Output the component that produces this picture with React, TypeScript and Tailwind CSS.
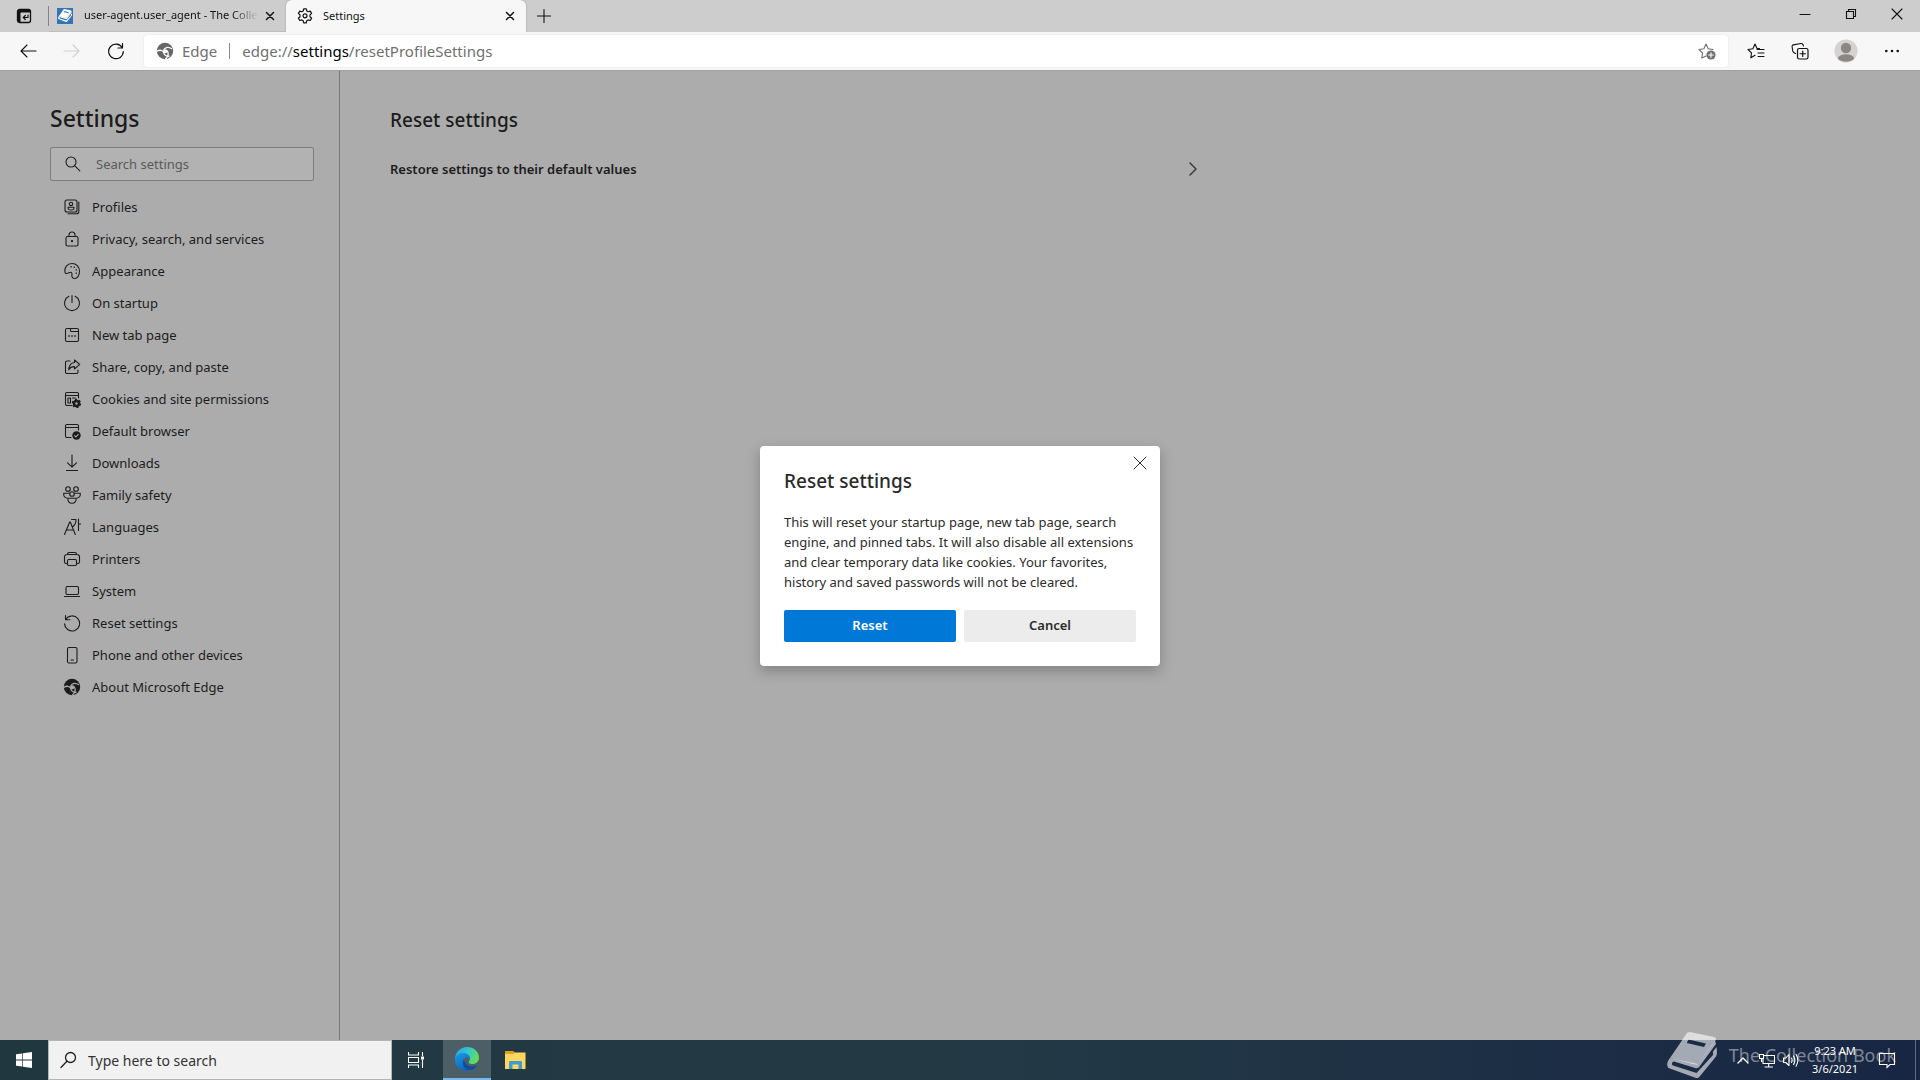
import { useState } from "react";
import type { ReactNode } from "react";

interface IconProps {
  children: ReactNode;
  className?: string;
  box?: number;
}

function Icon({ children, className = "size-[18px]", box = 18 }: IconProps) {
  return (
    <svg
      viewBox={`0 0 ${box} ${box}`}
      className={`shrink-0 ${className}`}
      fill="none"
      stroke="currentColor"
      strokeWidth="1.1"
      strokeLinecap="round"
      strokeLinejoin="round"
      aria-hidden="true"
    >
      {children}
    </svg>
  );
}

function EdgeMark({ className, id }: { className?: string; id: string }) {
  return (
    <svg viewBox="0 0 18 18" className={`shrink-0 ${className}`} aria-hidden="true">
      <mask id={id}>
        <circle cx="9" cy="9" r="8.2" fill="white" />
        <circle cx="9.300" cy="9.300" r="2" fill="black" />
        <g fill="none" stroke="black" strokeWidth="1.300">
          <path d="M8 10.500C6.500 7.700 3.500 7.600 0 9.800" />
          <path d="M7.500 8.500C8.500 5.400 11.500 4.200 16 6.800" />
          <path d="M10.800 8.500C13.200 10.800 12.500 14 9.300 17.300" />
          <path d="M7.800 9.500C7.500 12.500 9.800 14.600 13.500 14.200" />
        </g>
      </mask>
      <rect width="18" height="18" fill="currentColor" mask={`url(#${id})`} />
    </svg>
  );
}

function BookMark({ className }: { className?: string }) {
  return (
    <svg viewBox="0 0 50 46" className={className} fill="currentColor" aria-hidden="true">
      <path
        fillRule="evenodd"
        d="M23 0 47 5c2 .5 2.500 2 1.500 3.500L32 31c-1 1.500-2 2-4 1.600L3 26 19 2.500C20 .7 21 0 23 0zM21.500 7.500 19.700 11 37 15l2-3.500z"
      />
      <path d="M3 26c-2.500 3-4 7-1.500 10L29 46c1.500.4 2.500 0 3.500-1.300L49 24.500c1-1.500 1.300-5 .5-9.500L46 19.500v3.500L29.500 41 6 33.500c-2-1.500-1-3.500 1-4l21 6.500c2 .5 3.500 0 4.500-1.500L49 12l-1-3.500L31 32z" />
    </svg>
  );
}

const navItems: { title: string; icon: ReactNode }[] = [
  {
    title: "Profiles",
    icon: (
      <Icon>
        <rect x="2" y="2" width="12" height="12" rx="2" />
        <path d="M15.800 4v9.500a2.300 2.300 0 0 1-2.300 2.300H5" />
        <circle cx="8" cy="5.900" r="1.700" />
        <path d="M5 9.300h6c.3 1.800-1 2.700-3 2.700s-3.300-.9-3-2.700z" />
      </Icon>
    ),
  },
  {
    title: "Privacy, search, and services",
    icon: (
      <Icon>
        <rect x="3" y="6.500" width="12" height="9.500" rx="1.500" />
        <path d="M6 6.500V5a3 3 0 0 1 6 0v1.500" />
        <circle cx="9" cy="11.200" r=".6" fill="currentColor" />
      </Icon>
    ),
  },
  {
    title: "Appearance",
    icon: (
      <Icon>
        <path d="M2 10.300C.9 5.500 4.300 1.500 9 1.500c4.600 0 7.500 3.500 7.500 7.800 0 3.900-2 7.200-4.700 7.200-2.300 0-3.300-1.600-2.900-3.500.4-2-.5-3.200-2.200-2.500-1.500.6-4.100 1.900-4.700-.2z" />
        <g fill="currentColor" stroke="none">
          <circle cx="8" cy="4.700" r=".8" />
          <circle cx="11.300" cy="5.300" r=".8" />
          <circle cx="13.300" cy="8" r=".8" />
          <circle cx="13.300" cy="11.200" r=".8" />
        </g>
      </Icon>
    ),
  },
  {
    title: "On startup",
    icon: (
      <Icon>
        <path d="M9 1.500v7M5.800 2.300a7.500 7.500 0 1 0 6.400 0" />
      </Icon>
    ),
  },
  {
    title: "New tab page",
    icon: (
      <Icon>
        <rect x="2.500" y="2.500" width="13" height="13" rx="1.500" />
        <path d="M7.500 2.500v2c0 .6.400 1 1 1h7" />
        <path d="M5.800 10h.4M8.800 10h.4M11.800 10h.4" strokeWidth="1.500" />
      </Icon>
    ),
  },
  {
    title: "Share, copy, and paste",
    icon: (
      <Icon>
        <path d="M7 3H4a1.500 1.500 0 0 0-1.500 1.500v9.500A1.500 1.500 0 0 0 4 15.500h9.500A1.500 1.500 0 0 0 15 14v-2" />
        <path d="M11.500 2 16.700 6.400 11.500 11V8.600C8.500 8.500 6.800 9.800 5.700 11.800 6 7.700 8 4.800 11.500 4.500z" />
      </Icon>
    ),
  },
  {
    title: "Cookies and site permissions",
    icon: (
      <Icon>
        <path d="M8.500 15.500H4A1.500 1.500 0 0 1 2.500 14V4A1.500 1.500 0 0 1 4 2.500h10A1.500 1.500 0 0 1 15.500 4v4M2.500 5.500h13M5 8h2.500v5H5zM9.500 8h3" />
        <circle cx="13.500" cy="13.500" r="2.500" strokeWidth="2.500" />
        <circle cx="13.500" cy="13.500" r="4" strokeWidth="1.400" strokeDasharray="2.100 2.090" strokeLinecap="butt" />
      </Icon>
    ),
  },
  {
    title: "Default browser",
    icon: (
      <Icon>
        <path d="M8 15.500H4A1.500 1.500 0 0 1 2.500 14V4A1.500 1.500 0 0 1 4 2.500h10A1.500 1.500 0 0 1 15.500 4v4M2.500 5.500h13" />
        <circle cx="13.500" cy="13.500" r="4.200" fill="currentColor" stroke="none" />
        <path d="m11.700 13.700 1.200 1.200 2.400-2.500" className="stroke-[#acacac]" />
      </Icon>
    ),
  },
  {
    title: "Downloads",
    icon: (
      <Icon>
        <path d="M9 1v12M4.500 8.800 9 13.200l4.500-4.400M3.500 16.500h11" />
      </Icon>
    ),
  },
  {
    title: "Family safety",
    icon: (
      <Icon>
        <circle cx="5" cy="3" r="2.300" />
        <circle cx="13" cy="3" r="2.300" />
        <circle cx="9" cy="8" r="2.300" />
        <path d="M5 12.200h8c.5 3-1.200 5-4 5s-4.500-2-4-5zM6 7.200H.8C.3 9.800 1.600 11.700 4 12M12 7.200h5.200c.5 2.600-.8 4.500-3.200 4.800" />
      </Icon>
    ),
  },
  {
    title: "Languages",
    icon: (
      <Icon>
        <path d="M1.500 16.500 6.700 4h.6l5 12.500M3.400 12h7.200M8.500 1.500h4.500c0 3.500-1 5.500-3 7M15.500 1v11.500M15.500 6H18" />
      </Icon>
    ),
  },
  {
    title: "Printers",
    icon: (
      <Icon>
        <path d="M4.500 13.500H3A1.500 1.500 0 0 1 1.500 12V7A2.500 2.500 0 0 1 4 4.500h10A2.500 2.500 0 0 1 16.500 7v5a1.500 1.500 0 0 1-1.500 1.500h-1.500M4.500 4.500V4A1.500 1.500 0 0 1 6 2.500h6A1.500 1.500 0 0 1 13.500 4v.5" />
        <rect x="4.500" y="9.500" width="9" height="6" rx="1.200" />
      </Icon>
    ),
  },
  {
    title: "System",
    icon: (
      <Icon>
        <rect x="3" y="4.500" width="12.500" height="8" rx="1.200" />
        <path d="M1.500 14.500h15" />
      </Icon>
    ),
  },
  {
    title: "Reset settings",
    icon: (
      <Icon>
        <path d="M2.500 1.500v4.300h4.300M2.700 5.500a7.500 7.500 0 1 1-1.100 4.300" />
      </Icon>
    ),
  },
  {
    title: "Phone and other devices",
    icon: (
      <Icon>
        <rect x="4.500" y="1.500" width="9.500" height="15.500" rx="1.500" />
        <path d="M8 14h2.500" />
      </Icon>
    ),
  },
  { title: "About Microsoft Edge", icon: <EdgeMark id="edge-about" className="size-[18px]" /> },
];

function TabStrip() {
  return (
    <header className="flex h-8 shrink-0 bg-[#cdcdcd] text-[#111]">
      <button type="button" aria-label="Tab actions" className="flex w-12 items-center justify-center">
        <Icon className="size-4" box={16}>
          <rect x="1.500" y="1.500" width="13" height="13" rx="2" strokeWidth="1.300" />
          <path d="M2 2h12v2.500H4.500V14H2z" fill="currentColor" stroke="none" />
          <path d="M12 7v2.500H7.500M9.300 7.500l-2 2 2 2" strokeWidth="1.200" />
        </Icon>
      </button>
      <div className="my-1.5 w-px bg-[#858585]" />
      <div className="flex w-[237px] items-center border-b border-[#bdbdbd] pr-1 pl-2">
        <span className="flex size-4 shrink-0 items-center justify-center bg-[#3476b5] text-white">
          <BookMark className="w-3.5" />
        </span>
        <a
          href="#user-agent"
          className="ml-[11px] flex-1 overflow-hidden [mask-image:linear-gradient(to_right,black_85%,transparent)] text-[11px] whitespace-nowrap"
        >
          user-agent.user_agent - The Collection Book
        </a>
        <button type="button" aria-label="Close user-agent tab" className="flex size-6 items-center justify-center">
          <Icon className="size-2.5" box={10}>
            <path d="m1.500 1.500 7 7m0-7-7 7" strokeWidth="1.500" />
          </Icon>
        </button>
      </div>
      <div className="flex w-[240px] items-center rounded-t-md bg-[#f7f7f7] pr-1 shadow-[0_0_2px_#999]">
        <Icon className="ml-[11px] size-4" box={16}>
          <path
            d="M6.700.8h2.600l.5 2.100 1.400.8 2-.6 1.400 2.300-1.600 1.500v1.800l1.600 1.500-1.400 2.300-2-.6-1.400.8-.5 2.100H6.700l-.5-2.100-1.400-.8-2 .6-1.400-2.300L3 8.700V6.900L1.400 5.400l1.400-2.300 2 .6 1.400-.8z"
            strokeWidth="1.200"
          />
          <circle cx="8" cy="7.800" r="2" strokeWidth="1.200" />
        </Icon>
        <a href="#settings" className="ml-2.5 flex-1 text-[11px]">
          Settings
        </a>
        <button type="button" aria-label="Close settings tab" className="flex size-6 items-center justify-center">
          <Icon className="size-2.5" box={10}>
            <path d="m1.500 1.500 7 7m0-7-7 7" strokeWidth="1.500" />
          </Icon>
        </button>
      </div>
      <button type="button" aria-label="New tab" className="flex w-9 items-center justify-center">
        <Icon className="size-4" box={16}>
          <path d="M8 1.500v13M1.500 8h13" />
        </Icon>
      </button>
      <div className="ml-auto flex">
        <button type="button" aria-label="Minimize" className="flex w-[46px] items-center justify-center pb-1">
          <Icon className="size-3" box={12}>
            <path d="M1 6.500h10" />
          </Icon>
        </button>
        <button type="button" aria-label="Restore" className="flex w-[46px] items-center justify-center pb-1">
          <Icon className="size-3" box={12}>
            <path d="M1.500 3.500h7v7h-7zM3.500 3.500v-2h7v7h-2" strokeLinejoin="miter" />
          </Icon>
        </button>
        <button type="button" aria-label="Close window" className="flex w-[46px] items-center justify-center pb-1">
          <Icon className="size-3" box={12}>
            <path d="m1 1 10 10m0-10L1 11" />
          </Icon>
        </button>
      </div>
    </header>
  );
}

function Toolbar() {
  return (
    <div className="flex h-[39px] shrink-0 items-center border-b border-[#a0a0a0] bg-[#f7f7f7] text-[#111]">
      <button type="button" aria-label="Back" className="ml-[18px] flex size-5 items-center justify-center">
        <Icon>
          <path d="M17 9H2M8 3 2 9l6 6" />
        </Icon>
      </button>
      <button type="button" aria-label="Forward" className="ml-6 flex size-5 items-center justify-center text-[#cfcfcf]">
        <Icon>
          <path d="M1 9h15M10 3l6 6-6 6" />
        </Icon>
      </button>
      <button type="button" aria-label="Refresh" className="ml-6 flex size-5 items-center justify-center">
        <Icon>
          <path d="M15.500 1.500V6H11M15.200 5.500A7.300 7.300 0 1 0 16.300 9.500" strokeWidth="1.200" />
        </Icon>
      </button>
      <div className="ml-[18px] flex h-8 flex-1 items-center rounded-[3px] bg-white pr-3 pl-3 text-[15px] text-[#707070] shadow-[0_0_2px_#ddd]">
        <EdgeMark id="edge-address" className="size-[18px] text-[#666]" />
        <span className="ml-2">Edge</span>
        <span className="mx-3 h-4 w-px bg-[#8a8a8a]" />
        <a href="#settings" className="flex-1 leading-5">
          edge://<span className="text-black">settings</span>/resetProfileSettings
        </a>
        <button type="button" aria-label="Add this page to favorites">
          <Icon>
            <path d="M8 14 3.800 16l.7-5L1 7.500l4.900-.8L8 2l2.200 4.700 4.900.8" />
            <circle cx="13" cy="13" r="4.600" fill="currentColor" stroke="none" />
            <path d="M13 10.700v4.600M10.700 13h4.600" className="stroke-white" />
          </Icon>
        </button>
      </div>
      <div className="flex items-center gap-[26px] px-[19px]">
        <button type="button" aria-label="Favorites">
          <Icon>
            <path d="m8 13.300-4.200 2.500.7-5L1 7.500l4.900-.8L8 2l2 4.500h2.500M10 7.500h7M11 11h6M11 14.500h6" />
          </Icon>
        </button>
        <button type="button" aria-label="Collections">
          <Icon>
            <path d="M4.500 11.500 3 10.700C1.700 10 1.900 9.400 1.600 8.200L1.100 4.700c-.2-1 .3-1.600 1.300-1.800l7.500-1.400c1-.2 1.600.2 2 1l.6 1.500" />
            <rect x="6.500" y="6.500" width="10.500" height="10.500" rx="1.800" strokeWidth="1.200" />
            <path d="M11.750 9v5.500M9 11.750h5.500" strokeWidth="1.200" />
          </Icon>
        </button>
        <button type="button" aria-label="Profile" className="-mx-px">
          <svg viewBox="0 0 24 24" className="size-6" aria-hidden="true">
            <circle cx="12" cy="12" r="11.500" fill="#d5d2d0" />
            <circle cx="12" cy="9" r="5.200" fill="#8a8886" />
            <ellipse cx="12" cy="19" rx="8" ry="3.700" fill="#8a8886" />
          </svg>
        </button>
        <button type="button" aria-label="Settings and more">
          <Icon>
            <path d="M3.300 9h.01M9 9h.01M14.700 9h.01" strokeWidth="2.600" />
          </Icon>
        </button>
      </div>
    </div>
  );
}

function SettingsNav() {
  return (
    <aside className="w-[340px] shrink-0 border-r border-[#777] pr-[25px] pl-[50px]">
      <h1 className="pt-[31px] text-[23px] leading-8 font-medium">Settings</h1>
      <label className="mt-[13px] flex h-[34px] items-center rounded-[2px] border border-[#7c7c7c] bg-[#b2b2b2] pl-[13px]">
        <Icon>
          <circle cx="7" cy="7" r="5" />
          <path d="m10.800 10.800 5 5" />
        </Icon>
        <input
          type="search"
          aria-label="Search settings"
          placeholder="Search settings"
          className="ml-3.5 w-full bg-transparent pt-0.5 text-[13px] outline-none placeholder:text-[#5a5a5a]"
        />
      </label>
      <nav className="mt-2.5 text-[13px]">
        {navItems.map((item) => (
          <a key={item.title} href="#settings" className="flex h-8 items-center gap-[11px] pl-[13px]">
            {item.icon}
            <span className="pt-0.5">{item.title}</span>
          </a>
        ))}
      </nav>
    </aside>
  );
}

function ResetDialog({ onClose }: { onClose: () => void }) {
  return (
    <div className="absolute inset-0 flex items-center justify-center">
      <div
        role="dialog"
        aria-labelledby="reset-title"
        className="relative w-[400px] rounded-[4px] bg-white px-6 pt-[19px] pb-6 text-[#2b2b2b] shadow-[0_5px_14px_rgba(0,0,0,0.25)]"
      >
        <button type="button" aria-label="Close dialog" onClick={onClose} className="absolute top-2 right-[11px] p-0.5">
          <Icon className="size-3.5" box={14}>
            <path d="m1 1 12 12m0-12L1 13" strokeWidth="1" />
          </Icon>
        </button>
        <h2 id="reset-title" className="text-[19px] leading-8 font-medium">
          Reset settings
        </h2>
        <p className="mt-[15px] text-[13px] leading-5">
          This will reset your startup page, new tab page, search engine, and pinned tabs. It will also disable all
          extensions and clear temporary data like cookies. Your favorites, history and saved passwords will not be
          cleared.
        </p>
        <div className="mt-[18px] grid grid-cols-2 gap-2 text-[13px] font-semibold">
          <button type="button" onClick={onClose} className="h-8 rounded-[2px] bg-[#0078d7] text-white">
            Reset
          </button>
          <button type="button" onClick={onClose} className="h-8 rounded-[2px] bg-[#ececec]">
            Cancel
          </button>
        </div>
      </div>
    </div>
  );
}

function Taskbar() {
  return (
    <footer className="relative flex h-10 shrink-0 bg-linear-to-r from-[#213740] via-[#233a45] to-[#182644] text-white">
      <button type="button" aria-label="Start" className="flex w-12 items-center justify-center">
        <svg viewBox="0 0 16 16" className="size-4" fill="currentColor" aria-hidden="true">
          <path d="M0 2.300 6.300 1.400v6.200H0zM7 1.300 16 0v7.600H7zM0 8.400h6.300v6.200L0 13.700zM7 8.400h9V16l-9-1.300z" />
        </svg>
      </button>
      <label className="flex w-[344px] items-center border border-[#b5b5b5] bg-[#f1f1f1] pl-[11px] text-[#222]">
        <Icon>
          <circle cx="10.500" cy="6.500" r="5" strokeWidth="1.300" />
          <path d="M6.900 10.200 1 16.500" strokeWidth="1.300" />
        </Icon>
        <input
          type="search"
          aria-label="Type here to search"
          placeholder="Type here to search"
          className="ml-2.5 w-full bg-transparent text-[14px] outline-none placeholder:text-[#333]"
        />
      </label>
      <button type="button" aria-label="Task view" className="mr-[3px] flex w-12 items-center justify-center">
        <Icon className="size-4" box={16}>
          <path d="M.5.500v2.500h10V.500M.5 15.500V13h10v2.500M.5 5.500h10v5H.500zM14.500.500v3M14.500 8v7.500" strokeLinejoin="miter" />
          <path d="M13 4.500h3v3h-3z" fill="currentColor" stroke="none" />
        </Icon>
      </button>
      <button
        type="button"
        aria-label="Microsoft Edge"
        className="flex w-12 items-center justify-center border-b-2 border-[#76b9ed] bg-[#4d5f66]"
      >
        <svg viewBox="0 0 24 24" className="size-6" aria-hidden="true">
          <defs>
            <linearGradient id="edge-top" x1="0" y1="0.300" x2="1" y2="0.600">
              <stop offset="0" stopColor="#2aa6e2" />
              <stop offset=".5" stopColor="#35c8cf" />
              <stop offset="1" stopColor="#6be04b" />
            </linearGradient>
            <linearGradient id="edge-left" x1="0" y1="0" x2="0.600" y2="1">
              <stop offset="0" stopColor="#1b9de2" />
              <stop offset="1" stopColor="#0c62bd" />
            </linearGradient>
          </defs>
          <path
            d="M0 11.500C.5 5 5.500 0 12 0c7 0 12 5 12 10.500 0 4-3 6.500-6.500 6.500-3 0-4.500-1.200-3.500-2.500 2.500-3.500-.5-7.500-5.500-7.500C4.500 7 1.200 8.800 0 11.500z"
            fill="url(#edge-top)"
          />
          <path
            d="M0 12c.5-3.500 4-6 8-6 4.500 0 7 2.500 7 5.500-2-1.500-5-1.500-6 1-1.500 4.500 2 9 7 10.500C8 25.500 0 21 0 12z"
            fill="url(#edge-left)"
          />
          <path d="M9 12.500c-3 5 1 11 7 10.500 2.500-.5 5-2.500 6.300-4.800-5 2.500-12.500 1-13.300-5.700z" fill="#124b9b" />
        </svg>
      </button>
      <button type="button" aria-label="File Explorer" className="flex w-12 items-center justify-center">
        <svg viewBox="0 0 21 18" className="h-[18px] w-[21px]" aria-hidden="true">
          <path d="M0 0h8l1.500 1.500H20.500V18H0z" fill="#ffd75e" />
          <path d="M0 0h8l1.500 1.500L8 3H0z" fill="#dca21b" />
          <path d="M4 18V11.500c0-1 .5-1.500 1.500-1.500h10c1 0 1.500.500 1.500 1.500V18h-3.500v-4.500h-6V18z" fill="#409bd2" />
        </svg>
      </button>
      <div className="ml-auto flex items-center">
        <button type="button" aria-label="Show hidden icons" className="flex w-6 justify-center">
          <Icon className="size-3" box={12}>
            <path d="M1 9 6 4l5 5" strokeWidth="1.400" />
          </Icon>
        </button>
        <button type="button" aria-label="Network" className="flex w-6 justify-center">
          <Icon className="size-4" box={16}>
            <path d="M5 3.500h10.500v8H4V7M9.700 11.500v3M6 15h7.500M.5 2.500h4v4h-4zM2.500 6.500v3" strokeLinejoin="miter" />
          </Icon>
        </button>
        <button type="button" aria-label="Volume" className="flex w-6 justify-center">
          <Icon className="size-4" box={16}>
            <path d="M.5 6v4.500h2.300L6 13.500V2.500L2.800 6zM8.500 6c.8 1.500.8 3 0 4.500M10.500 4c1.800 2.700 1.800 5.700 0 8.500M13 2.300c2.500 4 2.500 8 0 12" />
          </Icon>
        </button>
        <div className="w-16 text-center text-[11px] leading-[18px]">
          <div>9:23 AM</div>
          <div>3/6/2021</div>
        </div>
        <button type="button" aria-label="Notifications" className="flex w-10 justify-center">
          <Icon>
            <path d="M1.500 2.500h15v11h-4.500L9 16.500v-3H1.500z" strokeLinejoin="miter" />
          </Icon>
        </button>
        <div className="ml-2 h-10 w-[5px] border-l border-[#5d6a80]" />
      </div>
      <div className="pointer-events-none absolute right-6 bottom-0.5 flex items-center gap-3 text-white/60">
        <BookMark className="h-[46px] w-[50px]" />
        <span className="text-[18px] text-white/45">The Collection Book</span>
      </div>
    </footer>
  );
}

export default function App() {
  const [open, setOpen] = useState(true);

  return (
    <div className="flex h-screen flex-col overflow-hidden bg-[#acacac] font-['Noto_Sans','Open_Sans',sans-serif] text-[#1c1c1c]">
      <TabStrip />
      <Toolbar />
      <div className="relative flex min-h-0 flex-1">
        <SettingsNav />
        <main className="max-w-[880px] flex-1 pt-[33px] pr-5 pl-[50px]">
          <h2 className="text-[19px] leading-8 font-medium">Reset settings</h2>
          <button
            type="button"
            onClick={() => setOpen(true)}
            className="mt-3 flex h-11 w-full items-center justify-between text-[13px] font-semibold"
          >
            Restore settings to their default values
            <Icon className="size-4 text-[#333]" box={16}>
              <path d="m6 1 6 6-6 6" strokeWidth="1.400" />
            </Icon>
          </button>
        </main>
        {open && <ResetDialog onClose={() => setOpen(false)} />}
      </div>
      <Taskbar />
    </div>
  );
}
